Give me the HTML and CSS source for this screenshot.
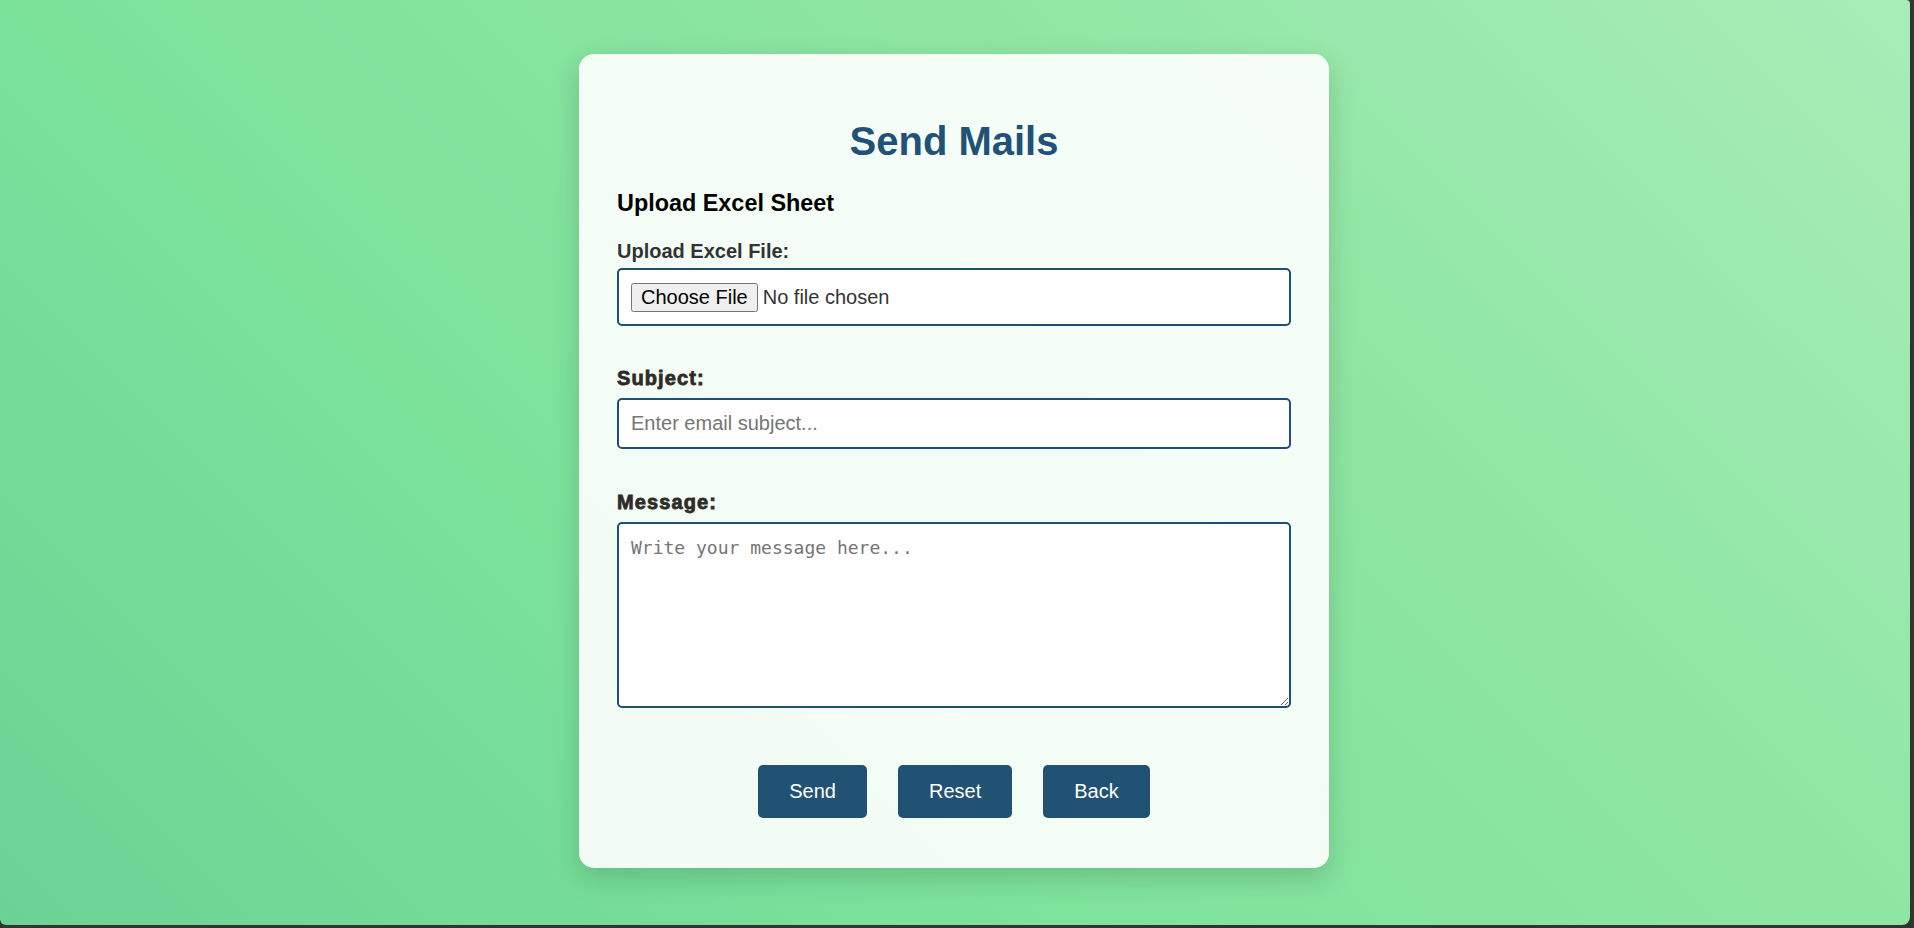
FILE: index.html
```html
<!DOCTYPE html>
<html lang="en">
<head>
<meta charset="utf-8">
<title>Send Mails</title>
<link rel="stylesheet" href="styles.css">
</head>
<body>
<div class="screen">
  <div class="card">
    <h1 class="title">Send Mails</h1>
    <h3 class="section-title">Upload Excel Sheet</h3>
    <div class="form-group group-file">
      <label class="label label-file" for="file">Upload Excel File:</label>
      <input class="field field-file" type="file" id="file">
    </div>
    <div class="form-group group-subject">
      <label class="label label-heavy" for="subject">Subject:</label>
      <input class="field" type="text" id="subject" placeholder="Enter email subject...">
    </div>
    <div class="form-group group-message">
      <label class="label label-heavy" for="message">Message:</label>
      <textarea class="field field-area" id="message" placeholder="Write your message here..."></textarea>
    </div>
    <div class="actions">
      <button class="btn" type="button">Send</button>
      <button class="btn" type="button">Reset</button>
      <button class="btn" type="button">Back</button>
    </div>
  </div>
</div>
</body>
</html>
```
FILE: styles.css
```css
html {
  background: #333333;
  height: 100%;
}
body {
  margin: 0;
  height: 100%;
  font-family: "Liberation Sans", Arial, sans-serif;
  font-size: 20px;
}
.screen {
  box-sizing: border-box;
  width: calc(100% - 4px);
  height: calc(100% - 3px);
  border-radius: 0 4px 8px 6px;
  background: linear-gradient(45deg, #6bd295 0%, #7be29a 33%, #8fe6a2 67%, #a7edb8 100%);
  display: flex;
  justify-content: center;
  align-items: flex-start;
  padding: 54px 2px 0 0;
}
.card {
  box-sizing: border-box;
  width: 750px;
  padding: 64px 38px 50px;
  background: rgba(255, 255, 255, 0.9);
  border-radius: 15px;
  box-shadow: 0 10px 28px rgba(0, 0, 0, 0.16);
}
.title {
  margin: 0;
  font-size: 40px;
  font-weight: 700;
  line-height: 46px;
  text-align: center;
  color: #1f5276;
}
.section-title {
  margin: 26px 0 0;
  font-size: 23.4px;
  font-weight: 700;
  line-height: 27px;
  color: #000;
}
.form-group {
  display: flex;
  flex-direction: column;
}
.group-file { margin-top: 23px; }
.group-subject { margin-top: 41px; }
.group-message { margin-top: 42px; }
.label {
  font-size: 20px;
  font-weight: 700;
  line-height: 23px;
  color: #333;
  margin-bottom: 8px;
}
.label-file { margin-bottom: 5px; }
.label-heavy {
  letter-spacing: 1.1px;
  -webkit-text-stroke: 0.8px #2e2b28;
  color: #2e2b28;
}
.field {
  box-sizing: border-box;
  width: 100%;
  margin: 0;
  padding: 12px;
  border: 2px solid #1f4f72;
  border-radius: 5px;
  background: #fff;
  font-family: "Liberation Sans", Arial, sans-serif;
  font-size: 20px;
  line-height: 23px;
  color: #333;
}
.field::placeholder {
  color: #757575;
}
.field-file {
  height: 58px;
  padding: 13px 12px;
}
.field-file::file-selector-button {
  font-family: "Liberation Sans", Arial, sans-serif;
  font-size: 20px;
  padding: 1px 8px;
  margin-right: 5px;
}
.field-area {
  display: block;
  height: 186px;
  font-family: "DejaVu Sans Mono", "Liberation Mono", monospace;
  font-size: 18px;
  line-height: 24px;
}
.actions {
  margin-top: 57px;
  display: flex;
  justify-content: center;
  gap: 31px;
}
.btn {
  padding: 15px 31px;
  border: none;
  border-radius: 5px;
  background: #215273;
  color: #fff;
  font-family: "Liberation Sans", Arial, sans-serif;
  font-size: 20px;
  line-height: 23px;
  cursor: pointer;
}
```
